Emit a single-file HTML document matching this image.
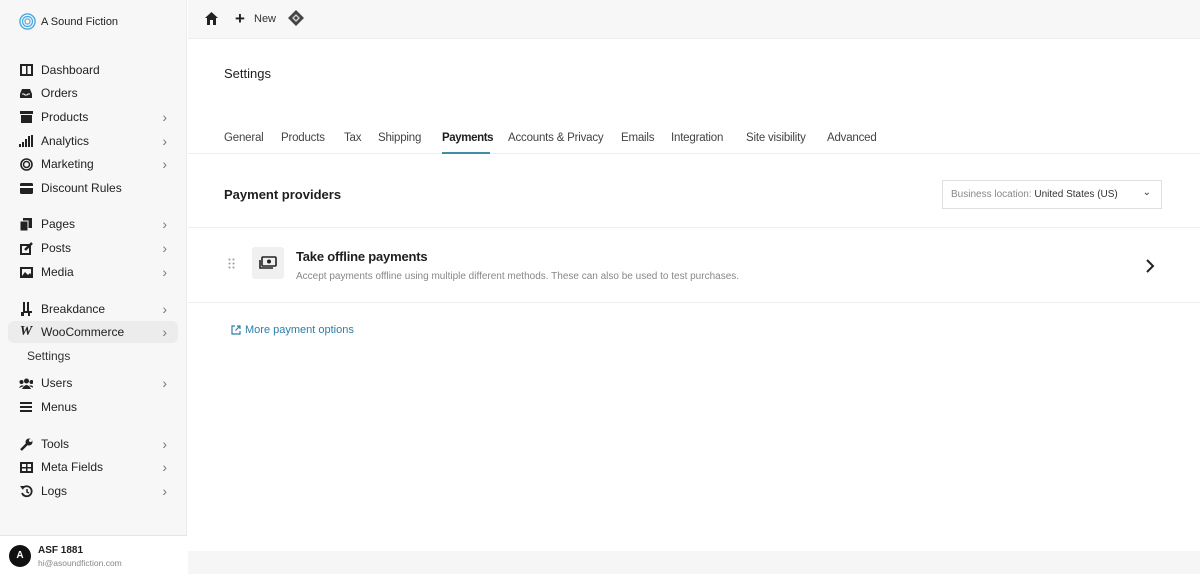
<!DOCTYPE html>
<html><head><style>
*{margin:0;padding:0;box-sizing:border-box}
body{width:1200px;height:574px;overflow:hidden;font-family:"Liberation Sans",sans-serif;color:#1e1e1e;background:#fff;position:relative}
.side{position:absolute;left:0;top:0;width:187px;height:574px;background:#f7f7f7;border-right:1px solid #ececec}
.logo{position:absolute;left:19px;top:13px;display:flex;align-items:center;font-size:11px;color:#222}
.item{position:absolute;left:8px;width:170px;height:22px;display:flex;align-items:center;font-size:12px;color:#222;border-radius:6px}
.item .ic{width:14px;height:14px;margin-left:11px;margin-right:8px;display:flex;align-items:center;justify-content:center}
.item .ch{position:absolute;right:11px;top:3px;color:#777;font-size:14px}
.foot{position:absolute;left:0;top:535px;width:187px;height:39px;background:#fff;border-top:1px solid #e5e5e5}
.top{position:absolute;left:188px;top:0;right:0;height:39px;background:#f7f7f7;border-bottom:1px solid #ececec}
.main{position:absolute;left:188px;top:39px;right:0;height:512px;background:#fff}
.bot{position:absolute;left:188px;top:551px;right:0;height:23px;background:#f6f6f6}
.tabs{position:absolute;left:224px;top:132px;font-size:11.5px;color:#444;letter-spacing:-0.2px}
.tabs span{position:absolute;white-space:nowrap}
</style></head><body>
<div class="side">
 <div class="logo"><svg width="17" height="17" viewBox="0 0 18 18"><circle cx="9" cy="9" r="8" fill="none" stroke="#4aa8e0" stroke-width="1.5"/><circle cx="9" cy="9" r="5.3" fill="none" stroke="#4aa8e0" stroke-width="1.3"/><circle cx="9" cy="9" r="2.7" fill="none" stroke="#4aa8e0" stroke-width="1.2"/></svg><span style="margin-left:5px">A Sound Fiction</span></div>
 <div class="item" style="top:59px"><span class="ic"><svg width="13" height="12"><rect x="1" y="1" width="11" height="10" fill="none" stroke="#222" stroke-width="2"/><rect x="6" y="1" width="1.5" height="10" fill="#222"/></svg></span>Dashboard</div>
 <div class="item" style="top:82px"><span class="ic"><svg width="14" height="11"><path d="M1 6 L3 1 H11 L13 6 V10 H1Z" fill="#222"/><path d="M3 6 H5 L6 7 H8 L9 6 H11" stroke="#fff" fill="none"/></svg></span>Orders</div>
 <div class="item" style="top:106px"><span class="ic"><svg width="13" height="12"><rect x="0" y="0" width="13" height="3" fill="#222"/><rect x="1" y="4" width="11" height="8" fill="#222"/></svg></span>Products<span class="ch">›</span></div>
 <div class="item" style="top:130px"><span class="ic"><svg width="14" height="12"><rect x="0" y="9" width="2" height="3" fill="#222"/><rect x="3" y="7" width="2" height="5" fill="#222"/><rect x="6" y="4" width="2" height="8" fill="#222"/><rect x="9" y="1" width="2" height="11" fill="#222"/><rect x="12" y="0" width="2" height="12" fill="#222"/></svg></span>Analytics<span class="ch">›</span></div>
 <div class="item" style="top:153px"><span class="ic"><svg width="13" height="13"><circle cx="6.5" cy="6.5" r="5.5" fill="none" stroke="#222" stroke-width="1.6"/><circle cx="6.5" cy="6.5" r="3" fill="none" stroke="#222" stroke-width="1.5"/></svg></span>Marketing<span class="ch">›</span></div>
 <div class="item" style="top:177px"><span class="ic"><svg width="13" height="11"><rect x="0" y="0" width="13" height="11" rx="1.5" fill="#222"/><rect x="0" y="3" width="13" height="2" fill="#fff"/></svg></span>Discount Rules</div>
 <div class="item" style="top:213px"><span class="ic"><svg width="12" height="13"><rect x="3" y="0" width="9" height="10" fill="#222"/><rect x="0" y="3" width="8" height="10" fill="#222" stroke="#f7f7f7"/></svg></span>Pages<span class="ch">›</span></div>
 <div class="item" style="top:237px"><span class="ic"><svg width="13" height="13"><rect x="1" y="3" width="9" height="9" fill="none" stroke="#222" stroke-width="2"/><path d="M5 8 L12 1" stroke="#222" stroke-width="2.5"/></svg></span>Posts<span class="ch">›</span></div>
 <div class="item" style="top:261px"><span class="ic"><svg width="13" height="11"><rect x="1" y="1" width="11" height="9" fill="none" stroke="#222" stroke-width="2"/><path d="M2 9 L5 5 L8 8 L10 6 L12 9Z" fill="#222"/></svg></span>Media<span class="ch">›</span></div>
 <div class="item" style="top:298px"><span class="ic"><svg width="12" height="14"><path d="M3 0 V10 H1 V14 H4 V11 H8 V14 H10 V11 H12 V9 H9 V0 H7 V9 H5 V0Z" fill="#222"/></svg></span>Breakdance<span class="ch">›</span></div>
 <div class="item" style="top:321px;background:#ececec"><span class="ic"><b style="font-family:'Liberation Serif',serif;font-size:14px;font-style:italic">W</b></span>WooCommerce<span class="ch">›</span></div>
 <div style="position:absolute;left:27px;top:349px;font-size:12px;color:#333">Settings</div>
 <div class="item" style="top:372px"><span class="ic"><svg width="15" height="11"><circle cx="7.5" cy="3" r="2.5" fill="#222"/><circle cx="2.5" cy="4" r="2" fill="#222"/><circle cx="12.5" cy="4" r="2" fill="#222"/><path d="M3 11 Q7.5 3 12 11Z M0 10 Q2 6 5 8 M10 8 Q13 6 15 10" fill="#222"/></svg></span>Users<span class="ch">›</span></div>
 <div class="item" style="top:396px"><span class="ic"><svg width="12" height="10"><rect y="0" width="12" height="2" fill="#222"/><rect y="4" width="12" height="2" fill="#222"/><rect y="8" width="12" height="2" fill="#222"/></svg></span>Menus</div>
 <div class="item" style="top:433px"><span class="ic"><svg width="13" height="13"><path d="M1 12 L7 6" stroke="#222" stroke-width="2.5"/><circle cx="9" cy="4" r="3.5" fill="#222"/><circle cx="10.5" cy="2.5" r="1.5" fill="#f7f7f7"/></svg></span>Tools<span class="ch">›</span></div>
 <div class="item" style="top:456px"><span class="ic"><svg width="13" height="11"><rect x="1" y="1" width="11" height="9" fill="none" stroke="#222" stroke-width="2"/><rect x="1" y="5" width="11" height="1.5" fill="#222"/><rect x="6" y="1" width="1.5" height="9" fill="#222"/></svg></span>Meta Fields<span class="ch">›</span></div>
 <div class="item" style="top:480px"><span class="ic"><svg width="13" height="13"><path d="M2.5 3.5 A5 5 0 1 1 2 8" fill="none" stroke="#222" stroke-width="1.8"/><path d="M0 1 L4 1 L3 5Z" fill="#222"/><path d="M7 4 V7 L9 8" stroke="#222" stroke-width="1.5" fill="none"/></svg></span>Logs<span class="ch">›</span></div>
 <div class="foot">
  <div style="position:absolute;left:9px;top:9px;width:22px;height:22px;border-radius:50%;background:#111;color:#fff;font-size:10px;font-weight:bold;text-align:center;line-height:22px">A</div>
  <div style="position:absolute;left:38px;top:9px;font-size:10px;font-weight:bold">ASF 1881</div>
  <div style="position:absolute;left:38px;top:22px;font-size:8.5px;color:#888">hi@asoundfiction.com</div>
 </div>
</div>
<div class="top">
 <svg style="position:absolute;left:17px;top:12px" width="13" height="13"><path d="M6.5 0 L13 6 H11 V13 H2 V6 H0Z" fill="#222"/><rect x="5" y="8" width="3" height="5" fill="#f7f7f7"/></svg>
 <span style="position:absolute;left:47px;top:9px;font-size:17px;font-weight:bold">+</span>
 <span style="position:absolute;left:66px;top:13px;font-size:11px;color:#333">New</span>
 <svg style="position:absolute;left:100px;top:10px" width="16" height="16"><path d="M8 0 L16 8 L8 16 L0 8Z" fill="#444"/><path d="M8 4 L12 8 L8 12 L4 8Z" fill="#ccc"/><path d="M8 6 L10 8 L8 10 L6 8Z" fill="#444"/></svg>
</div>
<div class="main">
 <div style="position:absolute;left:36px;top:27px;font-size:13px;color:#1e1e1e">Settings</div>
 <div style="position:absolute;left:0;right:0;top:114px;height:1px;background:#eee"></div>
 <div style="position:absolute;left:36px;top:148px;font-size:13px;font-weight:bold">Payment providers</div>
 <div style="position:absolute;left:754px;top:141px;width:220px;height:29px;border:1px solid #e0e0e0;font-size:10px;color:#888;padding:8px 8px">Business location: <span style="color:#333">United States (US)</span><span style="position:absolute;right:10px;top:6px;color:#333;font-size:10px">⌄</span></div>
 <div style="position:absolute;left:0;right:0;top:188px;height:1px;background:#eee"></div>
 <svg style="position:absolute;left:40px;top:219px" width="8" height="12"><g fill="#999"><circle cx="1.5" cy="1.5" r="1"/><circle cx="5.5" cy="1.5" r="1"/><circle cx="1.5" cy="5.5" r="1"/><circle cx="5.5" cy="5.5" r="1"/><circle cx="1.5" cy="9.5" r="1"/><circle cx="5.5" cy="9.5" r="1"/></g></svg>
 <div style="position:absolute;left:64px;top:208px;width:32px;height:32px;background:#f0f0f0;border-radius:3px"></div>
 <svg style="position:absolute;left:71px;top:217px" width="18" height="14"><rect x="3" y="1" width="14" height="9" rx="1" fill="none" stroke="#222" stroke-width="1.6"/><circle cx="10" cy="5.5" r="2" fill="#222"/><path d="M1 4 V12 H14" fill="none" stroke="#222" stroke-width="1.6"/></svg>
 <div style="position:absolute;left:108px;top:210px;font-size:13px;font-weight:bold;color:#1e1e1e;letter-spacing:-0.2px">Take offline payments</div>
 <div style="position:absolute;left:108px;top:232px;font-size:10px;color:#888">Accept payments offline using multiple different methods. These can also be used to test purchases.</div>
 <svg style="position:absolute;left:957px;top:220px" width="10" height="14"><path d="M2 1 L8 7 L2 13" fill="none" stroke="#222" stroke-width="2"/></svg>
 <div style="position:absolute;left:0;right:0;top:263px;height:1px;background:#eee"></div>
 <svg style="position:absolute;left:43px;top:286px" width="10" height="10"><path d="M4 1 H1 V9 H9 V6 M6 1 H9 V4 M9 1 L4.5 5.5" fill="none" stroke="#2b7fa8" stroke-width="1.2"/></svg>
 <div style="position:absolute;left:57px;top:285px;font-size:11px;color:#2b7fa8">More payment options</div>
</div>
<div class="tabs">
 <span style="left:0">General</span><span style="left:57px">Products</span><span style="left:120px">Tax</span><span style="left:154px">Shipping</span>
 <span style="left:218px;color:#1e1e1e;font-weight:bold;letter-spacing:-0.4px">Payments</span>
 <span style="left:284px">Accounts &amp; Privacy</span><span style="left:397px">Emails</span><span style="left:447px">Integration</span><span style="left:522px">Site visibility</span><span style="left:603px">Advanced</span>
</div>
<div style="position:absolute;left:442px;top:152px;width:48px;height:2px;background:#3f8ea6"></div>
<div class="bot"></div>
</body></html>
